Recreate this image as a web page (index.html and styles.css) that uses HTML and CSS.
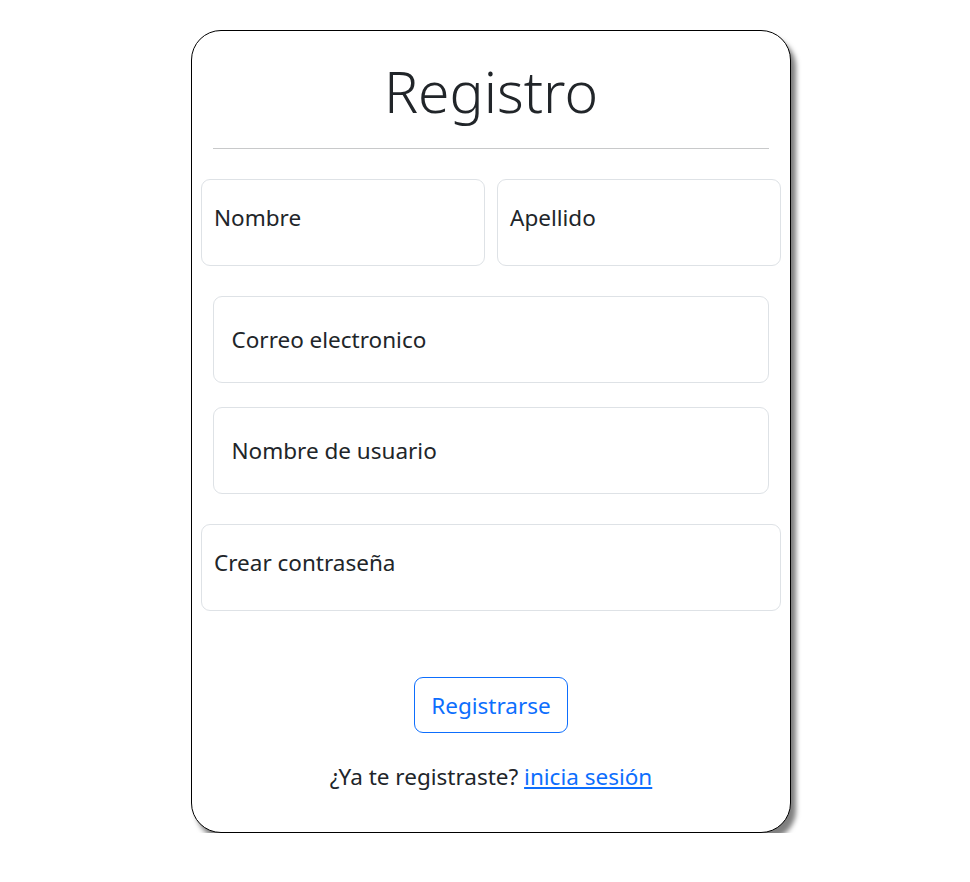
FILE: index.html
```html
<!DOCTYPE html>
<html lang="es">
<head>
<meta charset="utf-8">
<title>Registro</title>
<link rel="stylesheet" href="styles.css">
</head>
<body>
<main class="page">
  <section class="card">
    <h1 class="title">Registro</h1>
    <hr class="divider">
    <div class="row">
      <div class="field field-wide"><label class="field-label">Nombre</label></div>
      <div class="field field-wide"><label class="field-label">Apellido</label></div>
    </div>
    <div class="field field-inset field-email"><label class="field-label">Correo electronico</label></div>
    <div class="field field-inset field-user"><label class="field-label">Nombre de usuario</label></div>
    <div class="field field-wide field-pass"><label class="field-label">Crear contraseña</label></div>
    <div class="actions">
      <button class="btn" type="button">Registrarse</button>
    </div>
    <p class="footer-text">¿Ya te registraste? <a class="link" href="#">inicia sesión</a></p>
  </section>
</main>
</body>
</html>
```

FILE: styles.css
```css
* { box-sizing: border-box; }

html, body {
  margin: 0;
  padding: 0;
  background: #ffffff;
}

body {
  font-family: "Noto Sans", "DejaVu Sans", sans-serif;
  color: #212529;
}

.page {
  display: flex;
  justify-content: center;
  padding: 30px 0 0 12px;
}

.card {
  width: 600px;
  border: 1px solid #000000;
  border-radius: 30px;
  background: #ffffff;
  box-shadow: 5px 7px 5px rgba(0, 0, 0, 0.5);
  padding: 26px 21px 38px;
}

.title {
  margin: 0;
  text-align: center;
  font-size: 57px;
  font-weight: 300;
  line-height: 68px;
  color: #212529;
}

.divider {
  margin: 23px 0 30px;
  border: 0;
  border-top: 1px solid #c8c9ca;
  height: 0;
}

.row {
  display: flex;
  gap: 12px;
  margin: 0 -12px;
}

.row .field { flex: 1 1 0; }

.field {
  height: 87px;
  border: 1px solid #dee2e6;
  border-radius: 9px;
  background: #ffffff;
}

.field-label {
  display: block;
  font-size: 22.5px;
  line-height: 34px;
  color: #212529;
}

.field-wide .field-label { padding: 21px 12px 0; }

.field-inset .field-label { padding: 26px 17.5px 0; }

.field-email { margin-top: 30px; }
.field-user { margin-top: 24px; }

.field-pass {
  margin: 30px -12px 0;
}

.actions {
  display: flex;
  justify-content: center;
  margin-top: 66px;
}

.btn {
  width: 154px;
  height: 56px;
  border: 1px solid #0d6efd;
  border-radius: 9px;
  background: transparent;
  color: #0d6efd;
  font-family: inherit;
  font-size: 22.5px;
  padding: 2px 0 0;
  line-height: 1;
}

.footer-text {
  margin: 27px 0 0;
  text-align: center;
  font-size: 22.5px;
  line-height: 34px;
}

.link {
  color: #0d6efd;
  text-decoration: underline;
}
```
